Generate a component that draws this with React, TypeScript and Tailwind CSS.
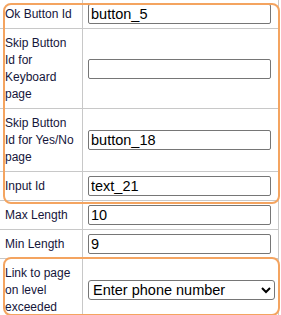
import React from "react";

type Row = { label: string; value?: string; select?: boolean };

const rows: Row[] = [
  { label: "Ok Button Id", value: "button_5" },
  { label: "Skip Button Id for Keyboard page", value: "" },
  { label: "Skip Button Id for Yes/No page", value: "button_18" },
  { label: "Input Id", value: "text_21" },
  { label: "Max Length", value: "10" },
  { label: "Min Length", value: "9" },
  { label: "Link to page on level exceeded", select: true },
];

export default function App() {
  return (
    <div className="relative w-[281px] h-[315px] overflow-hidden bg-white font-['Liberation_Sans',Arial,sans-serif]">
      <div className="w-[279px] border-r border-[#c8c8c8]">
        {rows.map((r, i) => (
          <div
            key={i}
            className="grid grid-cols-[83px_1fr] border-b border-[#c8c8c8]"
          >
            <div className="flex items-center border-r border-[#c8c8c8] px-[5px] py-[5.5px] text-[12px] leading-[17px] text-[#15153a]">
              {r.label}
            </div>
            <div className="flex items-center pl-[5px] pr-[7px] py-[4px]">
              {r.select ? (
                <select
                  defaultValue="Enter phone number"
                  className="w-[187px] h-[20px] border border-[#767676] rounded-[3px] bg-white pl-0 text-[14.5px] leading-[18px] text-black"
                >
                  <option>Enter phone number</option>
                </select>
              ) : (
                <input
                  type="text"
                  defaultValue={r.value}
                  className="w-[183px] h-[20px] border border-[#767676] rounded-[2px] px-[2px] text-[14.5px] leading-[18px] text-black"
                />
              )}
            </div>
          </div>
        ))}
      </div>
      <div className="pointer-events-none absolute left-[3px] top-[3px] w-[277px] h-[201px] rounded-[8px] border-2 border-[#f4a460]" />
      <div className="pointer-events-none absolute left-[3px] top-[257px] w-[277px] h-[59px] rounded-[8px] border-2 border-[#f4a460]" />
    </div>
  );
}
